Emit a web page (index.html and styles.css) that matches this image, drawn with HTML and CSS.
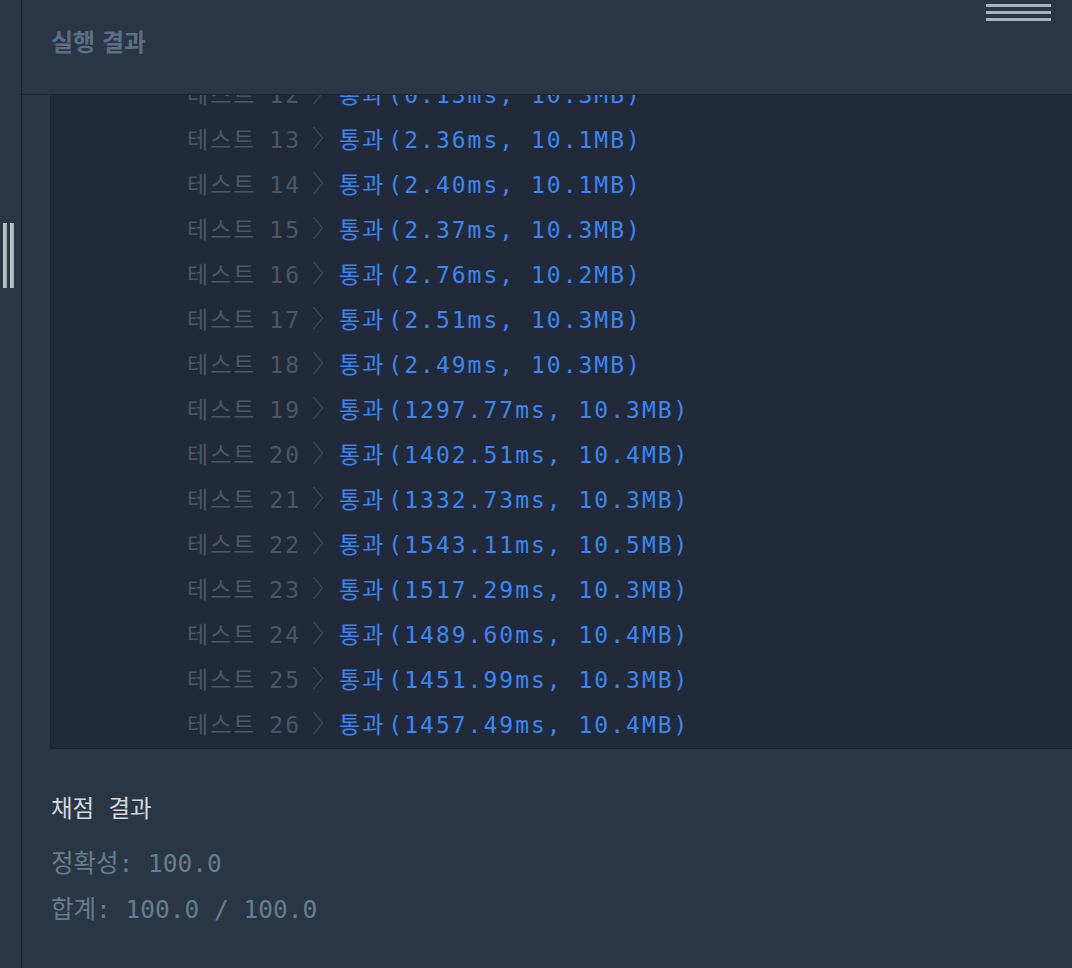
FILE: index.html
```html
<!DOCTYPE html>
<html lang="ko">

<head>
    <meta charset="UTF-8"/>
    <meta content="width=device-width, initial-scale=1.0" name="viewport"/>
    <title>실행 결과</title>
    <link rel="stylesheet" href="styles.css">
</head>

<body>
    <div class="app">
        <!-- 왼쪽 리사이즈 손잡이 -->
        <div class="gutter">
            <span class="grip"><i></i><i></i></span>
        </div>

        <div class="panel">
            <div class="panel-head">
                <h2>실행 결과</h2>
                <span class="grip-h"><i></i><i></i><i></i></span>
            </div>

            <!-- 테스트 결과 콘솔 (맨 아래로 스크롤된 상태) -->
            <div class="console">
                <ul class="tests">
                    <li><span class="label">테스트 12</span><svg class="chev" viewBox="0 0 12 24"><polyline points="1.5,1 10.5,12 1.5,23"/></svg><span class="pass">통과<span class="detail">(0.13ms, 10.3MB)</span></span></li>
                    <li><span class="label">테스트 13</span><svg class="chev" viewBox="0 0 12 24"><polyline points="1.5,1 10.5,12 1.5,23"/></svg><span class="pass">통과<span class="detail">(2.36ms, 10.1MB)</span></span></li>
                    <li><span class="label">테스트 14</span><svg class="chev" viewBox="0 0 12 24"><polyline points="1.5,1 10.5,12 1.5,23"/></svg><span class="pass">통과<span class="detail">(2.40ms, 10.1MB)</span></span></li>
                    <li><span class="label">테스트 15</span><svg class="chev" viewBox="0 0 12 24"><polyline points="1.5,1 10.5,12 1.5,23"/></svg><span class="pass">통과<span class="detail">(2.37ms, 10.3MB)</span></span></li>
                    <li><span class="label">테스트 16</span><svg class="chev" viewBox="0 0 12 24"><polyline points="1.5,1 10.5,12 1.5,23"/></svg><span class="pass">통과<span class="detail">(2.76ms, 10.2MB)</span></span></li>
                    <li><span class="label">테스트 17</span><svg class="chev" viewBox="0 0 12 24"><polyline points="1.5,1 10.5,12 1.5,23"/></svg><span class="pass">통과<span class="detail">(2.51ms, 10.3MB)</span></span></li>
                    <li><span class="label">테스트 18</span><svg class="chev" viewBox="0 0 12 24"><polyline points="1.5,1 10.5,12 1.5,23"/></svg><span class="pass">통과<span class="detail">(2.49ms, 10.3MB)</span></span></li>
                    <li><span class="label">테스트 19</span><svg class="chev" viewBox="0 0 12 24"><polyline points="1.5,1 10.5,12 1.5,23"/></svg><span class="pass">통과<span class="detail">(1297.77ms, 10.3MB)</span></span></li>
                    <li><span class="label">테스트 20</span><svg class="chev" viewBox="0 0 12 24"><polyline points="1.5,1 10.5,12 1.5,23"/></svg><span class="pass">통과<span class="detail">(1402.51ms, 10.4MB)</span></span></li>
                    <li><span class="label">테스트 21</span><svg class="chev" viewBox="0 0 12 24"><polyline points="1.5,1 10.5,12 1.5,23"/></svg><span class="pass">통과<span class="detail">(1332.73ms, 10.3MB)</span></span></li>
                    <li><span class="label">테스트 22</span><svg class="chev" viewBox="0 0 12 24"><polyline points="1.5,1 10.5,12 1.5,23"/></svg><span class="pass">통과<span class="detail">(1543.11ms, 10.5MB)</span></span></li>
                    <li><span class="label">테스트 23</span><svg class="chev" viewBox="0 0 12 24"><polyline points="1.5,1 10.5,12 1.5,23"/></svg><span class="pass">통과<span class="detail">(1517.29ms, 10.3MB)</span></span></li>
                    <li><span class="label">테스트 24</span><svg class="chev" viewBox="0 0 12 24"><polyline points="1.5,1 10.5,12 1.5,23"/></svg><span class="pass">통과<span class="detail">(1489.60ms, 10.4MB)</span></span></li>
                    <li><span class="label">테스트 25</span><svg class="chev" viewBox="0 0 12 24"><polyline points="1.5,1 10.5,12 1.5,23"/></svg><span class="pass">통과<span class="detail">(1451.99ms, 10.3MB)</span></span></li>
                    <li><span class="label">테스트 26</span><svg class="chev" viewBox="0 0 12 24"><polyline points="1.5,1 10.5,12 1.5,23"/></svg><span class="pass">통과<span class="detail">(1457.49ms, 10.4MB)</span></span></li>
                </ul>
            </div>

            <!-- 채점 결과 -->
            <div class="score">
                <h3>채점 결과</h3>
                <p>정확성: 100.0</p>
                <p>합계: 100.0 / 100.0</p>
            </div>
        </div>
    </div>
</body>

</html>
```

FILE: styles.css
```css
* {
    margin: 0;
    padding: 0;
    box-sizing: border-box;
}

ul {
    list-style: none;
}

body {
    background: #2a3646;
    font-family: "Noto Sans CJK KR", sans-serif;
    overflow: hidden;
}

.app {
    display: flex;
    height: 968px;
}

/* 왼쪽 손잡이 */
.gutter {
    width: 22px;
    flex-shrink: 0;
    border-right: 1px solid #1d2533;
    padding: 223px 0 0 3px;
}

.gutter .grip {
    display: flex;
    gap: 3px;
}

.gutter .grip i {
    width: 4px;
    height: 65px;
    background: linear-gradient(90deg, #c1cbd1, #9eaab2);
}

.panel {
    flex: 1;
    position: relative;
}

.panel-head {
    height: 95px;
    border-bottom: 1px solid #1d2533;
    padding: 24px 0 0 29px;
}

.panel-head h2 {
    font-size: 24px;
    line-height: 34px;
    font-weight: bold;
    color: #5d6f86;
}

/* 오른쪽 위 가로 손잡이 */
.panel-head .grip-h {
    position: absolute;
    top: 4px;
    right: 21px;
    display: flex;
    flex-direction: column;
    gap: 4px;
}

.panel-head .grip-h i {
    width: 65px;
    height: 3px;
    background: #a9b4bc;
}

.console {
    height: 654px;
    margin-left: 28px;
    background: #222a3a;
    border-left: 1px solid #1b2230;
    border-bottom: 1px solid #1b2230;
    overflow: hidden;
}

.tests {
    margin-top: -25px;
    padding-left: 136px;
    font-family: "DejaVu Sans Mono", "Noto Sans CJK KR", monospace;
    font-size: 23px;
    letter-spacing: 2px;
    white-space: nowrap;
}

.tests li {
    height: 45px;
    display: flex;
    align-items: center;
}

.tests .label {
    color: #4a5769;
    word-spacing: -3px;
}

.tests .chev {
    width: 12px;
    height: 24px;
    margin: 0 15px 0 11px;
}

.tests .chev polyline {
    fill: none;
    stroke: #3a4557;
    stroke-width: 1.5;
}

.tests .pass {
    color: #3a87f3;
}

.tests .detail {
    margin-left: 3px;
}

.score {
    padding: 44px 0 0 29px;
    font-family: "DejaVu Sans Mono", "Noto Sans CJK KR", monospace;
}

.score h3 {
    font-size: 23.5px;
    line-height: 32px;
    font-weight: normal;
    color: #d3d9de;
    margin-bottom: 16px;
}

.score p {
    font-size: 24.5px;
    line-height: 46px;
    color: #687d8f;
}
```
